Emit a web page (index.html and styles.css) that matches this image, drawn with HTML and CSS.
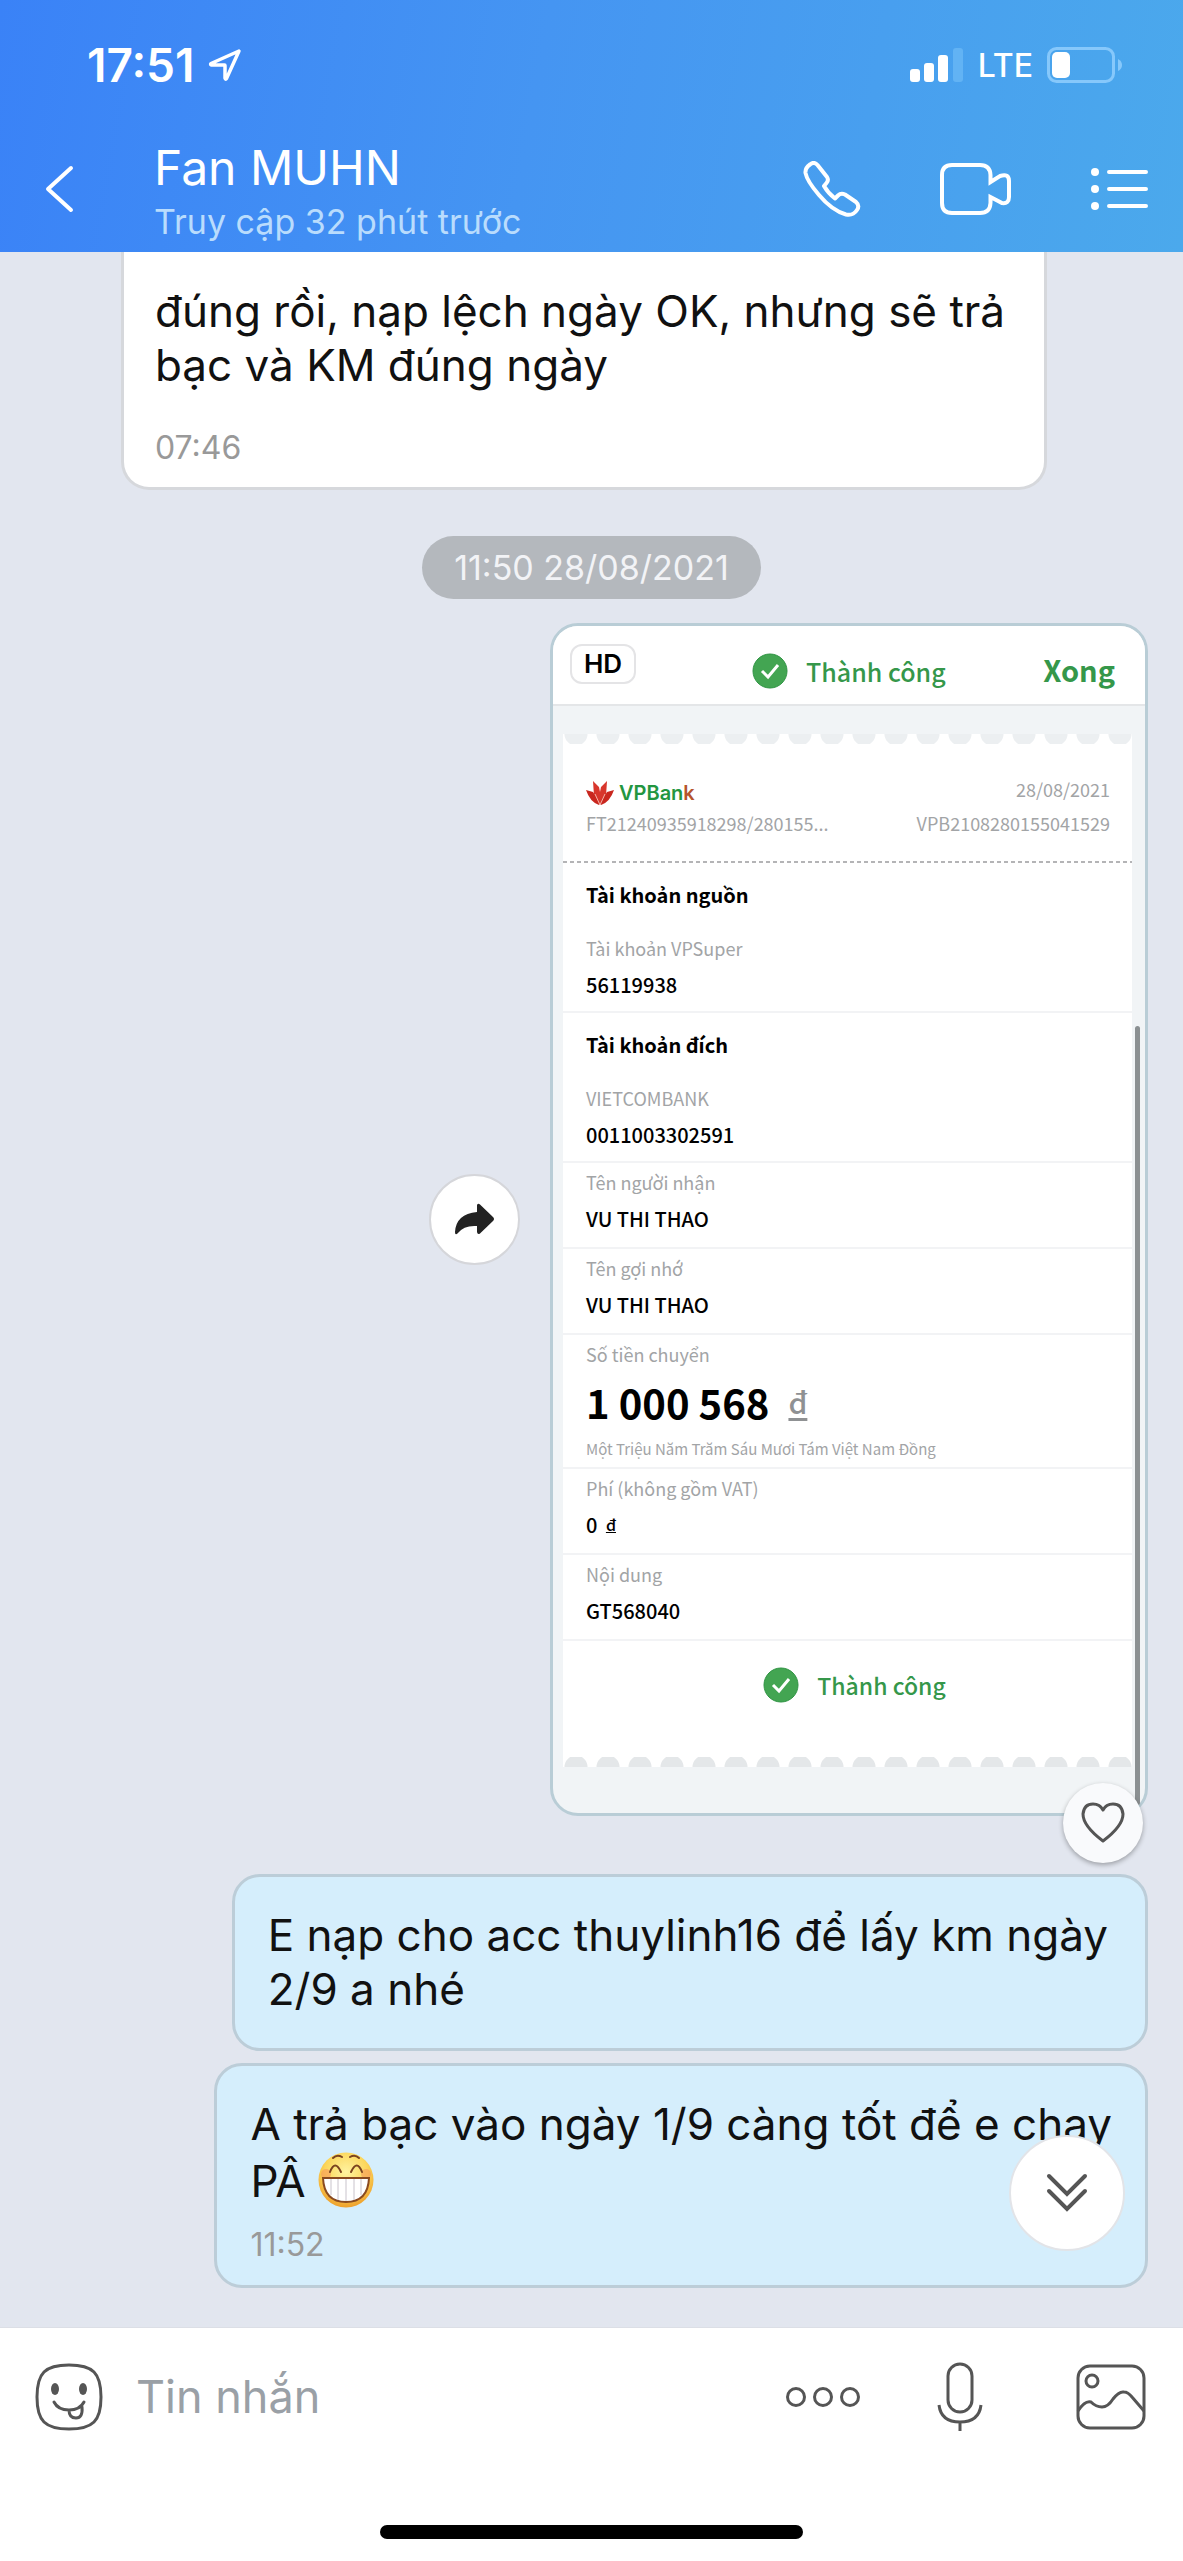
FILE: index.html
```html
<!DOCTYPE html>
<html lang="vi">
<head>
<meta charset="utf-8">
<title>Fan MUHN</title>
<meta name="viewport" content="width=device-width, initial-scale=1">
<link rel="stylesheet" href="styles.css">
</head>
<body>
<header class="top">
  <div class="status">
    <span class="clock">17:51</span>
    <svg class="location" width="34" height="34" viewBox="0 0 34 34"><path d="M31 3 3 15.500Q2 16.500 3.500 17H16.500Q17 17 17 17.500V30Q17.500 32 18.500 30.500Z" fill="none" stroke="#fff" stroke-width="3.500" stroke-linejoin="round"/></svg>
    <span class="status-end">
      <svg width="54" height="34" viewBox="0 0 54 34" fill="#fff"><rect x="0" y="21" width="10" height="13" rx="3"/><rect x="14" y="15" width="10" height="19" rx="3"/><rect x="28" y="7" width="10" height="27" rx="3"/><rect x="43" y="0" width="10" height="34" rx="3" fill="#62b3f4"/></svg>
      <span class="network">LTE</span>
      <svg width="76" height="36" viewBox="0 0 76 36"><rect x="1.500" y="1.500" width="65" height="33" rx="8" fill="none" stroke="#86c8fb" stroke-width="3"/><rect x="5" y="5" width="18" height="26" rx="5" fill="#fff"/><path d="M71 12Q75 14 75 18T71 24Z" fill="#86c8fb"/></svg>
    </span>
  </div>
  <div class="bar">
    <button class="icon-btn back" aria-label="Quay lại"><svg width="30" height="48" viewBox="0 0 30 48"><path d="M26 3 3 24 26 45" fill="none" stroke="#fff" stroke-width="4" stroke-linecap="round" stroke-linejoin="round"/></svg></button>
    <div class="peer">
      <h1>Fan MUHN</h1>
      <p>Truy cập 32 phút trước</p>
    </div>
    <nav class="actions">
      <button class="icon-btn" aria-label="Gọi"><svg width="58" height="56" viewBox="0 0 58 56"><path d="M7 3.500Q11 0 14.500 4L24 16Q26 19 23.500 22L21 25Q25 32 32 37.500L35 34.500Q38 31.500 42 33.500L53 41Q57 44.500 54 49Q50 55 43 53.500Q29 49.500 16 34Q4 20 2.500 12Q2 7 7 3.500Z" fill="none" stroke="#fff" stroke-width="4" stroke-linejoin="round"/></svg></button>
      <button class="icon-btn" aria-label="Gọi video"><svg width="72" height="52" viewBox="0 0 72 52"><path d="M12 2H40Q50 2 50.500 12V19L60 13Q69 10 69 18V34Q69 41 62 40L50.500 34V40Q50 50 40 50H12Q2 50 2 40V12Q2 2 12 2Z" fill="none" stroke="#fff" stroke-width="4"/></svg></button>
      <button class="icon-btn" aria-label="Tùy chọn"><svg width="58" height="44" viewBox="0 0 58 44"><g fill="#fff"><circle cx="4" cy="5" r="4"/><circle cx="4" cy="22" r="4"/><circle cx="4" cy="39" r="4"/></g><path d="M18 5H55M18 22H55M18 39H55" stroke="#fff" stroke-width="4" stroke-linecap="round"/></svg></button>
    </nav>
  </div>
</header>

<main class="chat">
  <article class="bubble incoming">
    <p>đúng rồi, nạp lệch ngày OK, nhưng sẽ trả<br>bạc và KM đúng ngày</p>
    <time>07:46</time>
  </article>

  <time class="day">11:50 28/08/2021</time>

  <div class="photo-row">
    <button class="share" aria-label="Chia sẻ"><svg width="42" height="34" viewBox="0 0 42 34"><path d="M23 2Q24 0 26 1.500L39 14Q41 16 39 18L26 30.500Q23.500 32 23 29V23Q10 22 4 30Q1 33 1 29Q2 11 23 9Z" fill="#222"/></svg></button>
    <figure class="photo">
      <div class="photo-head">
        <span class="hd">HD</span>
        <span class="done-mark head-mark"><svg width="36" height="36" viewBox="0 0 36 36"><circle cx="18" cy="18" r="17" fill="#43a552" stroke="#2f9443"/><path d="M10 18 16 24 26 12" fill="none" stroke="#fff" stroke-width="3"/></svg>Thành công</span>
        <span class="finish">Xong</span>
      </div>
      <div class="receipt">
        <div class="edge edge-top"></div>
        <div class="slip-head">
          <span class="bank"><svg width="28" height="26" viewBox="0 0 28 26"><path d="M14 25 8 16 7 1 13 7 14 12 15 7 21 1 20 16Z" fill="#d8362c"/><path d="M13 25Q4 22 0 10L7 12 13 22ZM15 25Q24 22 28 10L21 12 15 22Z" fill="#c9271f"/><path d="M14 25 9 14M14 25 19 14" stroke="#f4b4a8"/></svg><span>VPBan<b>k</b></span></span>
          <span class="end">28/08/2021</span>
          <span>FT21240935918298/280155...</span>
          <span class="end">VPB2108280155041529</span>
        </div>
        <div class="perforation"></div>
        <section class="row account">
          <h2>Tài khoản nguồn</h2>
          <span class="label">Tài khoản VPSuper</span>
          <span class="value">56119938</span>
        </section>
        <section class="row account">
          <h2>Tài khoản đích</h2>
          <span class="label">VIETCOMBANK</span>
          <span class="value">0011003302591</span>
        </section>
        <section class="row"><span class="label">Tên người nhận</span><span class="value">VU THI THAO</span></section>
        <section class="row"><span class="label">Tên gợi nhớ</span><span class="value">VU THI THAO</span></section>
        <section class="row amount"><span class="label">Số tiền chuyển</span><span class="sum">1 000 568 <u>đ</u></span><span class="words">Một Triệu Năm Trăm Sáu Mươi Tám Việt Nam Đồng</span></section>
        <section class="row"><span class="label">Phí (không gồm VAT)</span><span class="value">0 <u class="dong">đ</u></span></section>
        <section class="row"><span class="label">Nội dung</span><span class="value">GT568040</span></section>
        <div class="slip-foot"><span class="done-mark"><svg width="36" height="36" viewBox="0 0 36 36"><circle cx="18" cy="18" r="17" fill="#43a552" stroke="#2f9443"/><path d="M10 18 16 24 26 12" fill="none" stroke="#fff" stroke-width="3"/></svg>Thành công</span></div>
        <div class="edge edge-bottom"></div>
      </div>
      <span class="scrollbar"></span>
      <button class="like" aria-label="Thích"><svg width="44" height="42" viewBox="0 0 44 42"><path d="M22 39Q2 24 2 12Q3 2 12 2Q19 2 22 8Q25 2 32 2Q41 2 42 12Q42 24 22 39Z" fill="none" stroke="#555" stroke-width="3" stroke-linejoin="round"/></svg></button>
    </figure>
  </div>

  <article class="bubble outgoing">
    <p>E nạp cho acc thuylinh16 để lấy km ngày<br>2/9 a nhé</p>
  </article>

  <article class="bubble outgoing last">
    <p>A trả bạc vào ngày 1/9 càng tốt để e chạy<br>PÂ <svg class="emoji" width="56" height="56" viewBox="0 0 56 56" role="img" aria-label="cười"><defs><radialGradient id="face" cx=".5" cy=".35" r=".65"><stop offset="0" stop-color="#fff3a0"/><stop offset=".6" stop-color="#fcd65a"/><stop offset="1" stop-color="#ee9f2a"/></radialGradient></defs><circle cx="28" cy="28" r="27.500" fill="url(#face)"/><circle cx="8" cy="22" r="5" fill="#f79a5c" opacity=".6"/><circle cx="48" cy="22" r="5" fill="#f79a5c" opacity=".6"/><path d="M5 26H51Q50 50 28 50T5 26Z" fill="#fff" stroke="#8a4a20" stroke-width="2"/><path d="M13 27V43M20 27V48M28 27V49M36 27V48M43 27V43" stroke="#c9c4cc"/><path d="M12 20Q17 7 23 20M33 20Q39 7 44 20M15 6Q19 2 24 5M32 5Q37 2 41 6" fill="none" stroke="#7c4420" stroke-width="2" stroke-linecap="round"/></svg></p>
    <time>11:52</time>
    <button class="to-end" aria-label="Xuống cuối"><svg width="42" height="40" viewBox="0 0 42 40"><path d="M3 3 21 21 39 3M3 18 21 36 39 18" fill="none" stroke="#555" stroke-width="4" stroke-linecap="round"/></svg></button>
  </article>
</main>

<footer class="composer">
  <form class="compose-row">
    <button type="button" class="icon-btn" aria-label="Nhãn dán"><svg width="68" height="68" viewBox="0 0 68 68"><path d="M34 2Q52 2 59 9T66 34T59 59T34 66T9 59T2 34T9 9T34 2Z" fill="none" stroke="#555" stroke-width="3"/><ellipse cx="20" cy="26" rx="4" ry="6" fill="#555"/><ellipse cx="48" cy="26" rx="4" ry="6" fill="#555"/><path d="M19 39Q23 47 34 47T49 39M34 47Q34 55 41 55Q48 55 47 44" fill="none" stroke="#555" stroke-width="3" stroke-linecap="round"/></svg></button>
    <label class="field"><input type="text" placeholder="Tin nhắn" aria-label="Tin nhắn"></label>
    <button type="button" class="icon-btn more" aria-label="Thêm"><svg width="76" height="22" viewBox="0 0 76 22" fill="none" stroke="#555" stroke-width="3"><circle cx="11" cy="11" r="8.500"/><circle cx="38" cy="11" r="8.500"/><circle cx="65" cy="11" r="8.500"/></svg></button>
    <button type="button" class="icon-btn mic" aria-label="Ghi âm"><svg width="46" height="70" viewBox="0 0 46 70" fill="none" stroke="#555" stroke-width="3"><rect x="11" y="2" width="24" height="48" rx="12"/><path d="M2 43Q4 60 23 60T44 43M23 60V69"/></svg></button>
    <button type="button" class="icon-btn" aria-label="Ảnh"><svg width="70" height="66" viewBox="0 0 70 66" fill="none" stroke="#555" stroke-width="3"><rect x="2" y="2" width="66" height="62" rx="12"/><circle cx="16" cy="17" r="6"/><path d="M2 47Q9 36 15 38Q20 43 26 43Q32 43 37 35Q43 27 48 28Q52 28 56 33L68 47"/></svg></button>
  </form>
  <div class="home"></div>
</footer>
</body>
</html>
```
FILE: styles.css
```css
* { box-sizing: border-box; margin: 0; }
body {
  min-height: 100vh;
  display: flex;
  flex-direction: column;
  background: #e2e6ef;
  color: #111;
  font-family: Inter, "Noto Sans", sans-serif;
}
button { border: 0; padding: 0; background: none; cursor: pointer; }
svg { display: block; flex: none; }
.icon-btn { display: flex; }

.top {
  height: 252px;
  background: linear-gradient(100deg, #3a82f7, #4595f2 45%, #4ba9ec);
  color: #fff;
}
.status { display: flex; align-items: center; height: 130px; padding: 0 60px 0 87px; }
.clock { font-size: 46px; font-weight: 600; }
.location { margin-left: 14px; }
.status-end { display: flex; align-items: center; gap: 14px; margin-left: auto; }
.network { font-size: 32px; font-weight: 500; }
.bar { display: flex; align-items: center; height: 118px; padding: 0 34px 0 45px; }
.peer { flex: 1; margin-left: 79px; padding-top: 5px; }
.peer h1 { font-size: 48px; line-height: 60px; font-weight: 400; }
.peer p { font-size: 34px; line-height: 48px; color: #b9dcfd; }
.actions { display: flex; align-items: center; gap: 79px; }

.chat { flex: 1; display: flex; flex-direction: column; align-items: flex-end; padding: 0 35px 39px; }
.bubble {
  position: relative;
  padding: 31px 37px 32px 33px;
  border: 3px solid #bccdd8;
  border-radius: 28px;
  background: #d5eefc;
}
.bubble p { font-size: 44px; line-height: 54px; white-space: nowrap; }
.bubble time { display: block; font-size: 32px; line-height: 40px; color: #999; }
.incoming {
  align-self: flex-start;
  width: 926px;
  margin-left: 86px;
  padding: 32px 30px 19px 31px;
  border-color: #d6d8dc;
  border-top: 0;
  border-radius: 0 0 28px 28px;
  background: #fff;
}
.incoming time { margin-top: 36px; }
.day {
  align-self: center;
  margin: 46px 0 24px;
  padding: 0 32px;
  border-radius: 32px;
  background: #b4b8bd;
  color: #f2f3f6;
  font-size: 34px;
  line-height: 63px;
}

.photo-row { display: flex; align-items: center; gap: 30px; }
.share {
  display: grid;
  place-items: center;
  width: 91px;
  height: 91px;
  border: 2px solid #d5d6da;
  border-radius: 50%;
  background: #fff;
}
.photo {
  position: relative;
  width: 598px;
  border: 3px solid #b9cdd6;
  border-radius: 28px;
  background: #f1f4f6;
  font-family: "Noto Sans CJK SC", "Noto Sans", sans-serif;
}
.photo-head {
  display: flex;
  align-items: center;
  height: 80px;
  padding: 0 30px 0 17px;
  border-bottom: 2px solid #e4e6e8;
  border-radius: 25px 25px 0 0;
  background: #fff;
  color: #35974a;
}
.hd {
  align-self: flex-start;
  width: 66px;
  margin-top: 18px;
  border: 2px solid #e4e4e6;
  border-radius: 12px;
  color: #000;
  font: 600 26px/36px Inter, sans-serif;
  text-align: center;
}
.done-mark { display: flex; align-items: center; gap: 18px; color: #35974a; font-size: 25px; font-weight: 500; }
.head-mark { margin: 12px auto 0 116px; }
.finish { margin-top: 8px; font-size: 29px; font-weight: 700; }
.receipt { margin: 28px 13px 46px 10px; background: #fff; }
.edge {
  height: 10px;
  background: radial-gradient(circle at 50% 0, #eceff1 11px, transparent 12px) -3px 0 / 32px 10px repeat-x;
}
.slip-head {
  display: grid;
  grid-template-columns: 1fr auto;
  grid-template-rows: 34px 34px;
  align-items: end;
  padding: 28px 22px 21px 23px;
  color: #a2a4a6;
  font-size: 18px;
  line-height: 34px;
}
.end { text-align: right; }
.bank { display: flex; align-items: center; gap: 5px; color: #239640; font: 600 20px/26px Inter, sans-serif; }
.bank b { font-weight: 600; color: #b5542c; }
.perforation { height: 2px; background: repeating-linear-gradient(90deg, #b4b4b6 0 4px, transparent 4px 7px); }
.row { display: flex; flex-direction: column; padding: 7px 23px 10px; border-bottom: 2px solid #f2f3f5; }
.account { padding: 15px 23px 8px; }
.row h2 { margin-bottom: 24px; font-size: 20px; line-height: 34px; font-weight: 700; color: #000; }
.label { color: #a2a4a6; font-size: 18px; line-height: 24px; }
.value { margin-top: 6px; color: #000; font-size: 20px; line-height: 37px; font-weight: 500; }
.amount { padding-bottom: 4px; }
.sum { height: 60px; margin-top: 6px; color: #000; font-size: 40px; line-height: 60px; font-weight: 700; }
.sum u { margin-left: 10px; vertical-align: 5px; line-height: 30px; color: #8f9193; font-size: 30px; font-weight: 500; text-underline-offset: 4px; }
.words { margin-top: 3px; color: #a2a4a6; font-size: 15px; line-height: 28px; }
.dong { margin-left: 4px; vertical-align: 2px; line-height: 16px; font-size: 16px; }
.slip-foot { display: flex; justify-content: center; height: 116px; padding: 26px 0 0 14px; }
.slip-foot .done-mark { height: 36px; font-size: 23px; }
.edge-bottom { background: radial-gradient(circle at 50% 100%, #e4e7e9 11px, transparent 12px) -3px 0 / 32px 10px repeat-x; }
.scrollbar { position: absolute; top: 400px; right: 5px; bottom: 8px; width: 5px; border-radius: 3px; background: #8b9092; }
.like {
  position: absolute;
  right: 2px;
  bottom: -50px;
  display: grid;
  place-items: center;
  width: 80px;
  height: 80px;
  border-radius: 50%;
  background: #f9fafc;
  box-shadow: 0 2px 5px #00000050;
}
.outgoing { margin-top: 58px; }
.last { margin-top: 12px; padding-right: 33px; padding-bottom: 20px; }
.last time { margin-top: 17px; }
.emoji { display: inline-block; margin-top: 1px; vertical-align: -11px; }
.to-end {
  position: absolute;
  right: 20px;
  bottom: 34px;
  display: grid;
  place-items: center;
  width: 116px;
  height: 116px;
  border: 2px solid #e2e4e8;
  border-radius: 50%;
  background: #fff;
}

.composer { height: 234px; background: #fff; border-top: 1px solid #dcdfe6; }
.compose-row { display: flex; align-items: center; height: 137px; padding: 0 37px 0 35px; }
.field { flex: 1; min-width: 0; margin: 0 33px; }
.field input { width: 100%; border: 0; padding: 0; outline: 0; background: none; color: #111; font: 400 45px/60px Inter, sans-serif; }
.field input::placeholder { color: #9aa0a6; opacity: 1; }
.mic { margin: 0 93px 0 76px; }
.home { width: 423px; height: 14px; margin: 60px auto 0; border-radius: 7px; background: #000; }
```
